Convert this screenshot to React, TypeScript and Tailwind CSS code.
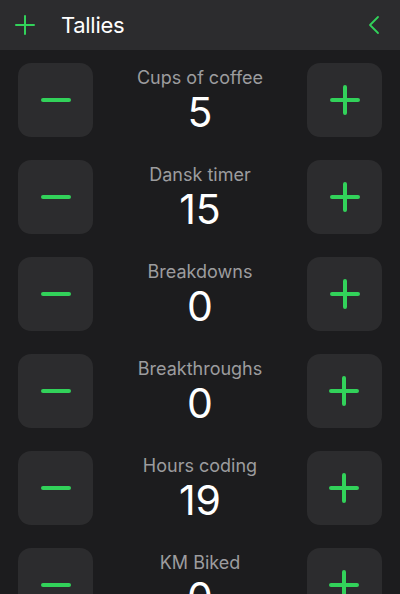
import { useState } from 'react'

interface Tally {
  id: number
  name: string
  count: number
}

const initialTallies: Tally[] = [
  { id: 1, name: 'Cups of coffee', count: 5 },
  { id: 2, name: 'Dansk timer', count: 15 },
  { id: 3, name: 'Breakdowns', count: 0 },
  { id: 4, name: 'Breakthroughs', count: 0 },
  { id: 5, name: 'Hours coding', count: 19 },
  { id: 6, name: 'KM Biked', count: 0 },
]

function MinusIcon() {
  return (
    <svg width="32" height="32" viewBox="0 0 32 32">
      <path d="M3 16h26" stroke="#32d25a" strokeWidth="4" strokeLinecap="round" />
    </svg>
  )
}

function PlusIcon() {
  return (
    <svg width="32" height="32" viewBox="0 0 32 32">
      <path d="M3 16h26M16 3v26" stroke="#32d25a" strokeWidth="4" strokeLinecap="round" />
    </svg>
  )
}

function TallyRow({ tally, onChange }: { tally: Tally; onChange: (d: number) => void }) {
  return (
    <div className="flex items-center justify-between h-[74px] shrink-0">
      <button
        onClick={() => onChange(-1)}
        className="w-[75px] h-[74px] rounded-[13px] bg-[#2c2c2e] flex items-center justify-center"
      >
        <MinusIcon />
      </button>
      <div className="flex flex-col items-center">
        <p className="text-[18px] leading-[22px] text-[#9c9c9f]">{tally.name}</p>
        <p className="text-[41px] leading-[44px] text-white mt-[1px]">{tally.count}</p>
      </div>
      <button
        onClick={() => onChange(1)}
        className="w-[75px] h-[74px] rounded-[13px] bg-[#2c2c2e] flex items-center justify-center"
      >
        <PlusIcon />
      </button>
    </div>
  )
}

export default function App() {
  const [tallies, setTallies] = useState(initialTallies)

  const update = (id: number, d: number) =>
    setTallies(tallies.map(t => (t.id === id ? { ...t, count: t.count + d } : t)))

  return (
    <div
      className="w-[400px] h-[594px] bg-[#1c1c1e] overflow-hidden flex flex-col"
      style={{ fontFamily: 'Inter, "Liberation Sans", sans-serif' }}
    >
      <header className="h-[50px] bg-[#2c2c2e] flex items-center justify-between pl-[15px] pr-[20px] shrink-0">
        <div className="flex items-center gap-[26px]">
          <svg width="20" height="20" viewBox="0 0 20 20">
            <path d="M1 10h18M10 1v18" stroke="#32d25a" strokeWidth="2" strokeLinecap="round" />
          </svg>
          <h1 className="text-[22px] text-white tracking-[-0.3px]">Tallies</h1>
        </div>
        <svg width="12" height="20" viewBox="0 0 12 20">
          <path d="M10 2L2 10l8 8" stroke="#32d25a" strokeWidth="1.8" fill="none" strokeLinecap="round" strokeLinejoin="round" />
        </svg>
      </header>
      <main className="flex flex-col gap-[23px] px-[18px] pt-[13px]">
        {tallies.map(t => (
          <TallyRow key={t.id} tally={t} onChange={d => update(t.id, d)} />
        ))}
      </main>
    </div>
  )
}
